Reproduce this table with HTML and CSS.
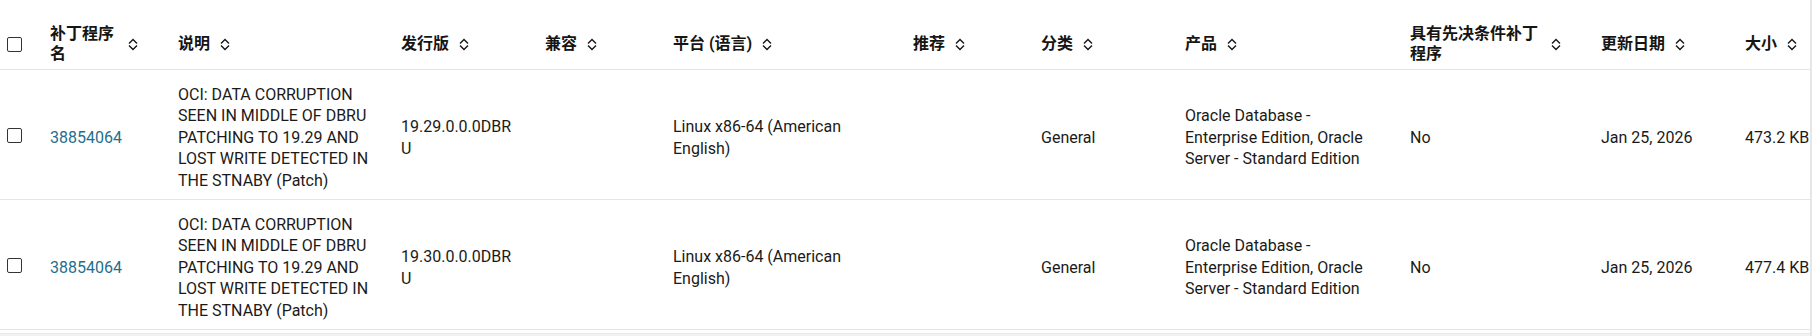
FILE: index.html
```html
<!DOCTYPE html>
<html lang="zh-CN">
<head>
<meta charset="utf-8">
<title>补丁程序</title>
<link rel="stylesheet" href="styles.css">
</head>
<body>
<div class="grid-wrap">
  <div class="scroller">
    <table class="patch-table">
      <colgroup>
        <col class="c-check">
        <col class="c-name">
        <col class="c-desc">
        <col class="c-rel">
        <col class="c-compat">
        <col class="c-plat">
        <col class="c-rec">
        <col class="c-class">
        <col class="c-prod">
        <col class="c-prereq">
        <col class="c-date">
        <col class="c-size">
      </colgroup>
      <thead>
        <tr>
          <th class="check-cell"><span class="checkbox"></span></th>
          <th><div class="th-inner"><span class="th-label">补丁程序名</span><svg class="sort" viewBox="0 0 10 13"><polyline points="1,5.5 5,1.5 9,5.5"/><polyline points="1,7.5 5,11.5 9,7.5"/></svg></div></th>
          <th><div class="th-inner"><span class="th-label">说明</span><svg class="sort" viewBox="0 0 10 13"><polyline points="1,5.5 5,1.5 9,5.5"/><polyline points="1,7.5 5,11.5 9,7.5"/></svg></div></th>
          <th><div class="th-inner"><span class="th-label">发行版</span><svg class="sort" viewBox="0 0 10 13"><polyline points="1,5.5 5,1.5 9,5.5"/><polyline points="1,7.5 5,11.5 9,7.5"/></svg></div></th>
          <th><div class="th-inner"><span class="th-label">兼容</span><svg class="sort" viewBox="0 0 10 13"><polyline points="1,5.5 5,1.5 9,5.5"/><polyline points="1,7.5 5,11.5 9,7.5"/></svg></div></th>
          <th><div class="th-inner"><span class="th-label">平台 (语言)</span><svg class="sort" viewBox="0 0 10 13"><polyline points="1,5.5 5,1.5 9,5.5"/><polyline points="1,7.5 5,11.5 9,7.5"/></svg></div></th>
          <th><div class="th-inner"><span class="th-label">推荐</span><svg class="sort" viewBox="0 0 10 13"><polyline points="1,5.5 5,1.5 9,5.5"/><polyline points="1,7.5 5,11.5 9,7.5"/></svg></div></th>
          <th><div class="th-inner"><span class="th-label">分类</span><svg class="sort" viewBox="0 0 10 13"><polyline points="1,5.5 5,1.5 9,5.5"/><polyline points="1,7.5 5,11.5 9,7.5"/></svg></div></th>
          <th><div class="th-inner"><span class="th-label">产品</span><svg class="sort" viewBox="0 0 10 13"><polyline points="1,5.5 5,1.5 9,5.5"/><polyline points="1,7.5 5,11.5 9,7.5"/></svg></div></th>
          <th><div class="th-inner"><span class="th-label">具有先决条件补丁程序</span><svg class="sort" viewBox="0 0 10 13"><polyline points="1,5.5 5,1.5 9,5.5"/><polyline points="1,7.5 5,11.5 9,7.5"/></svg></div></th>
          <th><div class="th-inner"><span class="th-label">更新日期</span><svg class="sort" viewBox="0 0 10 13"><polyline points="1,5.5 5,1.5 9,5.5"/><polyline points="1,7.5 5,11.5 9,7.5"/></svg></div></th>
          <th><div class="th-inner"><span class="th-label">大小</span><svg class="sort" viewBox="0 0 10 13"><polyline points="1,5.5 5,1.5 9,5.5"/><polyline points="1,7.5 5,11.5 9,7.5"/></svg></div></th>
        </tr>
      </thead>
      <tbody>
        <tr>
          <td class="check-cell"><span class="checkbox"></span></td>
          <td><a class="patch-link" href="#">38854064</a></td>
          <td>OCI: DATA CORRUPTION SEEN IN MIDDLE OF DBRU PATCHING TO 19.29 AND LOST WRITE DETECTED IN THE STNABY (Patch)</td>
          <td class="rel">19.29.0.0.0DBRU</td>
          <td></td>
          <td>Linux x86-64 (American English)</td>
          <td></td>
          <td>General</td>
          <td>Oracle Database - Enterprise Edition, Oracle Server - Standard Edition</td>
          <td>No</td>
          <td>Jan 25, 2026</td>
          <td>473.2 KB</td>
        </tr>
        <tr>
          <td class="check-cell"><span class="checkbox"></span></td>
          <td><a class="patch-link" href="#">38854064</a></td>
          <td>OCI: DATA CORRUPTION SEEN IN MIDDLE OF DBRU PATCHING TO 19.29 AND LOST WRITE DETECTED IN THE STNABY (Patch)</td>
          <td class="rel">19.30.0.0.0DBRU</td>
          <td></td>
          <td>Linux x86-64 (American English)</td>
          <td></td>
          <td>General</td>
          <td>Oracle Database - Enterprise Edition, Oracle Server - Standard Edition</td>
          <td>No</td>
          <td>Jan 25, 2026</td>
          <td>477.4 KB</td>
        </tr>
      </tbody>
    </table>
  </div>
  <div class="hscroll">
    <div class="hscroll-btn"></div>
    <div class="hscroll-thumb" style="width:1511px"></div>
  </div>
</div>
</body>
</html>
```

FILE: styles.css
```css
html, body {
  margin: 0;
  padding: 0;
  background: #ffffff;
  overflow: hidden;
}

body {
  font-family: Roboto, "Noto Sans CJK SC", sans-serif;
  font-size: 16px;
  color: #1b1a18;
}

.grid-wrap {
  padding-top: 17px;
  border-right: 2px solid #e6e6e6;
  width: 1810px;
}

.scroller {
  overflow: hidden;
  width: 100%;
}

.patch-table {
  border-collapse: collapse;
  table-layout: fixed;
  width: 1857px;
}

.c-check { width: 34px; }
.c-name { width: 128px; }
.c-desc { width: 223px; }
.c-rel { width: 144px; }
.c-compat { width: 128px; }
.c-plat { width: 240px; }
.c-rec { width: 128px; }
.c-class { width: 144px; }
.c-prod { width: 225px; }
.c-prereq { width: 191px; }
.c-date { width: 144px; }
.c-size { width: 128px; }

.patch-table th {
  padding: 7px 24px 5px 16px;
  text-align: left;
  vertical-align: middle;
  font-family: Roboto, "Noto Sans CJK SC", sans-serif;
  font-weight: 700;
  font-size: 16px;
  line-height: 20px;
  color: #161513;
  border-bottom: 1px solid #e4e4e4;
}

.th-inner {
  display: flex;
  align-items: center;
  gap: 10px;
}

.th-label {
  flex: 0 1 auto;
  min-width: 0;
}

.sort {
  flex: none;
  width: 10px;
  height: 13px;
  fill: none;
  stroke: #161513;
  stroke-width: 1.4;
}

.patch-table td {
  padding: 14px 16px 8px;
  vertical-align: middle;
  line-height: 21.4px;
  border-bottom: 1px solid #e4e4e4;
  overflow-wrap: anywhere;
}

.patch-table td.rel {
  word-break: break-all;
}

.patch-table .check-cell {
  padding: 2px 0 0 7px;
}

.patch-table th.check-cell {
  padding: 2px 0 0 7px;
}

.checkbox {
  display: block;
  width: 15px;
  height: 15px;
  box-sizing: border-box;
  border: 1.5px solid #333333;
  border-radius: 2px;
  background: #ffffff;
}

.patch-link {
  color: #1f6f8f;
  text-decoration: none;
}

.hscroll {
  display: flex;
  align-items: stretch;
  height: 17px;
  margin-top: 3px;
  background: #f1f1f1;
  border-top: 1px solid #e9e9e9;
}

.hscroll-btn {
  width: 8px;
  flex: none;
}

.hscroll-thumb {
  flex: none;
  background: #d6d6d6;
  margin: 2px 0;
}
```
